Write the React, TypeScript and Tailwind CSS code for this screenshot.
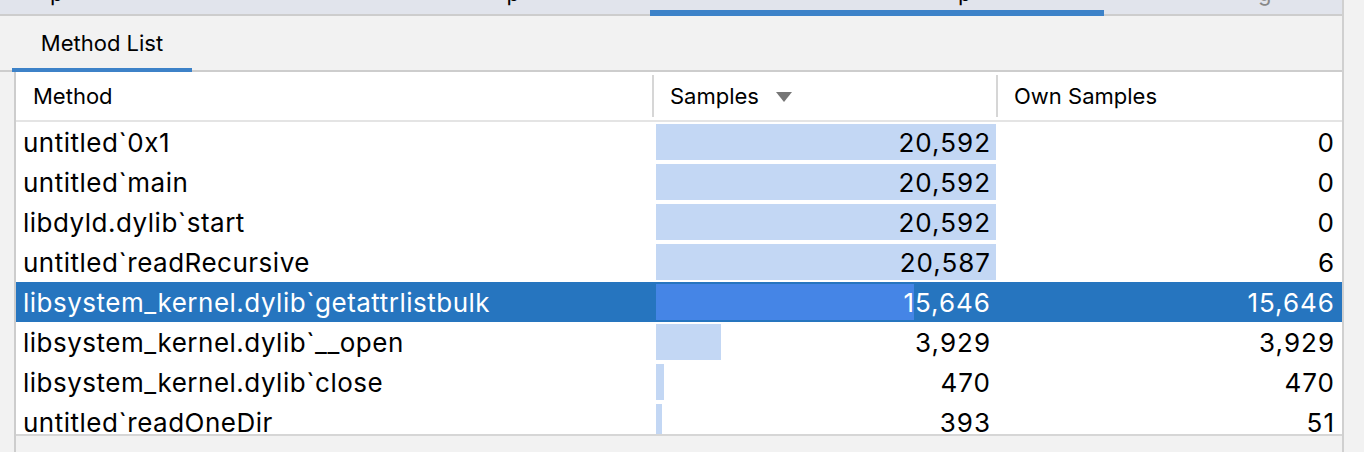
import React from "react";

type Row = { method: string; samples: number; own: number; selected?: boolean };

const rows: Row[] = [
  { method: "untitled`0x1", samples: 20592, own: 0 },
  { method: "untitled`main", samples: 20592, own: 0 },
  { method: "libdyld.dylib`start", samples: 20592, own: 0 },
  { method: "untitled`readRecursive", samples: 20587, own: 6 },
  { method: "libsystem_kernel.dylib`getattrlistbulk", samples: 15646, own: 15646, selected: true },
  { method: "libsystem_kernel.dylib`__open", samples: 3929, own: 3929 },
  { method: "libsystem_kernel.dylib`close", samples: 470, own: 470 },
  { method: "untitled`readOneDir", samples: 393, own: 51 },
];

const MAX = 20592;
const BAR_MAX = 340;

function fmt(n: number) {
  return n.toLocaleString("en-US");
}

export default function App() {
  return (
    <div
      className="w-[1364px] h-[452px] flex overflow-hidden bg-[#f2f2f2] text-black"
      style={{ fontFamily: "Inter, 'Liberation Sans', sans-serif" }}
    >
      <div className="w-[1342px] flex flex-col">
        {/* top tab strip, mostly cut off */}
        <div className="h-[16px] flex bg-[#e1e4ec] text-[22px] leading-[22px]">
          <div className="w-[650px] h-full border-b-2 border-[#cdcdcd] overflow-hidden flex">
            <span className="ml-[50px] -mt-[18px]">p</span>
            <span className="ml-[443px] -mt-[18px]">p</span>
          </div>
          <div className="w-[454px] h-full border-b-[6px] border-[#3d82c8] overflow-hidden flex">
            <span className="ml-[308px] -mt-[18px]">p</span>
          </div>
          <div className="flex-1 h-full border-b-2 border-[#cdcdcd] overflow-hidden flex">
            <span className="ml-[154px] -mt-[18px] text-[#888]">g</span>
          </div>
        </div>

        {/* sub tabs */}
        <div className="h-[56px] flex items-end">
          <div className="w-[12px] border-b-2 border-[#cdcdcd]" />
          <div className="w-[180px] h-full flex items-center justify-center border-b-4 border-[#3d82c8] text-[22px] pt-[2px]">
            Method List
          </div>
          <div className="flex-1 border-b-2 border-[#cdcdcd]" />
        </div>

        {/* table */}
        <div className="flex-1 flex min-h-0">
          <div className="w-[14px]" />
          <div className="flex-1 flex flex-col border-l-2 border-[#cdcdcd] min-h-0">
            <div className="flex-1 bg-white overflow-hidden min-h-0">
              <div className="h-[50px] flex items-center border-b-2 border-[#e4e4e4] text-[22px]">
                <div className="w-[638px] h-[42px] flex items-center pl-[17px] border-r-2 border-[#d6d6d6]">
                  Method
                </div>
                <div className="w-[344px] h-[42px] flex items-center pl-[16px] border-r-2 border-[#d6d6d6]">
                  Samples
                  <svg width="16" height="10" viewBox="0 0 16 10" className="ml-[17px] mt-[1px]">
                    <path d="M0 0 L16 0 L8 10 Z" fill="#767676" />
                  </svg>
                </div>
                <div className="flex-1 h-[42px] flex items-center pl-[16px]">Own Samples</div>
              </div>

              {rows.map((r) => (
                <div
                  key={r.method}
                  className={
                    "h-[40px] flex items-center text-[26px] tracking-[0.5px] " +
                    (r.selected ? "bg-[#2675bf] text-white" : "")
                  }
                >
                  <div className="w-[638px] pl-[7px] whitespace-nowrap">{r.method}</div>
                  <div className="w-[344px] h-full relative flex items-center justify-end pr-[7px]">
                    <div
                      className={
                        "absolute left-[2px] top-[2px] bottom-[2px] " +
                        (r.selected ? "bg-[#4585e6]" : "bg-[#c3d7f4]")
                      }
                      style={{ width: Math.max(6, Math.round((r.samples / MAX) * BAR_MAX)) }}
                    />
                    <span className="relative tracking-[1px]">{fmt(r.samples)}</span>
                  </div>
                  <div className="flex-1 flex justify-end pr-[7px] tracking-[1px]">{fmt(r.own)}</div>
                </div>
              ))}
            </div>
            <div className="h-[18px] border-t-2 border-[#d6d6d6] bg-[#f2f2f2]" />
          </div>
        </div>
      </div>
      <div className="flex-1 border-l-2 border-[#d0d0d0] bg-[#f2f2f2]" />
    </div>
  );
}
